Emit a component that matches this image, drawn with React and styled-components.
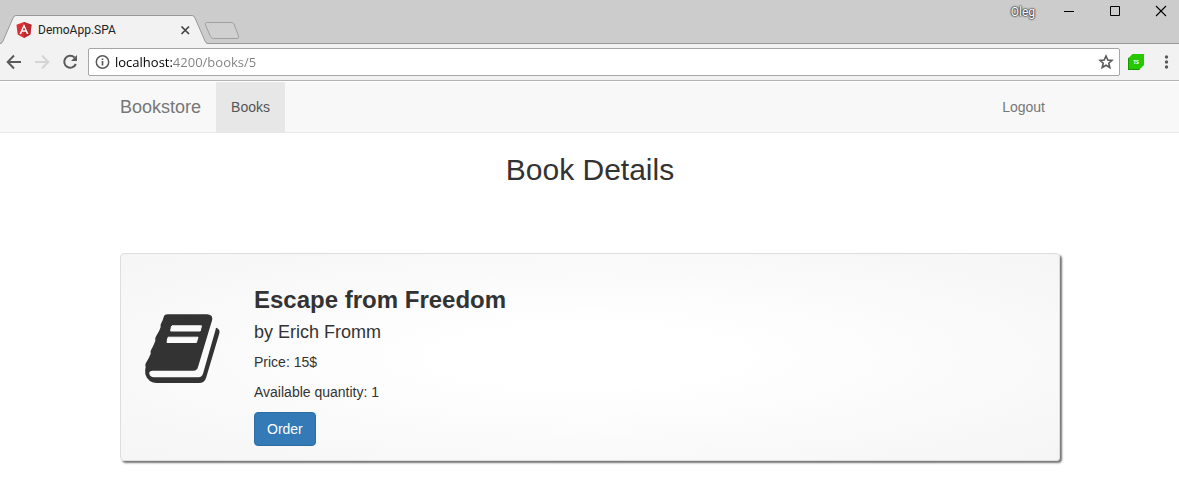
import React, { useState } from 'react';
import styled, { createGlobalStyle } from 'styled-components';

const GlobalStyle = createGlobalStyle`
  *, *::before, *::after { box-sizing: border-box; }
  body {
    margin: 0;
    background: #fff;
    color: #333;
    font: 14px/20px "Liberation Sans", Arial, sans-serif;
  }
  button, input { font: inherit; }
`;

const TabStrip = styled.header`
  display: flex;
  align-items: flex-start;
  height: 44px;
  background: #ccc;
  border-bottom: 1px solid #989898;
  font-family: Roboto, sans-serif;
`;

const Tab = styled.div`
  position: relative;
  display: flex;
  align-items: center;
  width: 208px;
  height: 29px;
  margin-top: 15px;
  padding: 0 16px;
  flex: none;
`;

const TabShape = styled.svg`
  position: absolute;
  inset: 0;
`;

const TabTitle = styled.span`
  position: relative;
  flex: 1;
  margin-left: 6px;
  font-size: 12px;
  color: #222;
`;

const TabLogo = styled.svg`
  position: relative;
`;

const PlainButton = styled.button`
  position: relative;
  display: flex;
  align-items: center;
  justify-content: center;
  flex: none;
  width: ${(p) => p.$width}px;
  height: ${(p) => p.$height}px;
  padding: 0;
  border: 0;
  background: none;
`;

const NewTab = styled(PlainButton)`
  margin: 22px auto 0 -4px;
`;

const Profile = styled.span`
  margin: 3px 12px 0 0;
  font-size: 12px;
  line-height: 18px;
  color: #fff;
  text-shadow: 0 0 1px #222, 0 0 2px #222, 0 0 2px #444;
`;

const Toolbar = styled.div`
  display: flex;
  align-items: center;
  height: 37px;
  background: #f2f2f2;
  border-bottom: 1px solid #b2b2b2;
`;

const AddressBox = styled.div`
  display: flex;
  align-items: center;
  flex: 1;
  height: 28px;
  margin-left: 4px;
  padding: 0 5px 0 6px;
  background: #fff;
  border: 1px solid #a6a6a6;
  border-radius: 2px;
`;

/* The host part is darker than the rest of the address. */
const AddressInput = styled.input`
  flex: 1;
  min-width: 0;
  height: 24px;
  margin-left: 5px;
  padding: 0;
  border: 0;
  outline: 0;
  font-family: "Open Sans", "Noto Sans", sans-serif;
  font-size: 13px;
  color: transparent;
  caret-color: #000;
  background: linear-gradient(90deg, #000 58px, #808080 58px);
  background-clip: text;
  -webkit-background-clip: text;
`;

const Navbar = styled.nav`
  margin-top: 1px;
  background: #f8f8f8;
  border-bottom: 1px solid #e7e7e7;
`;

const Container = styled.div`
  max-width: 969px;
  margin: 0 auto;
  padding: 0 14px 0 15px;
`;

const Main = styled(Container)`
  padding-bottom: 36px;
`;

const NavRow = styled(Container)`
  display: flex;
  align-items: center;
`;

const Brand = styled.a`
  padding: 15px 15px 15px 0;
  font-size: 18px;
  color: #777;
  text-decoration: none;
`;

const NavLink = styled.a`
  padding: 15px;
  color: ${(p) => (p.$active ? '#555' : '#777')};
  background: ${(p) => (p.$active ? '#e7e7e7' : 'transparent')};
  margin-left: ${(p) => (p.$end ? 'auto' : '0')};
  text-decoration: none;
`;

const PageTitle = styled.h2`
  margin: 20px 0 67px;
  font-size: 30px;
  line-height: 33px;
  font-weight: 400;
  text-align: center;
`;

const BookCard = styled.article`
  display: flex;
  align-items: center;
  gap: 33px;
  padding: 14px 24px;
  border: 1px solid #ddd;
  border-radius: 4px;
  background: radial-gradient(ellipse at center, #fff 0%, #fff 20%, #f5f5f5 100%);
  box-shadow: 2px 2px 2px #777;
`;

const BookIcon = styled.svg`
  flex: none;
  margin-top: -16px;
`;

const BookName = styled.h3`
  margin: 19px 0 9px;
  font-size: 24px;
  line-height: 26px;
  font-weight: 700;
`;

const Author = styled.h4`
  margin: 0 0 10px;
  font-size: 18px;
  line-height: 20px;
  font-weight: 400;
`;

const Detail = styled.p`
  margin: 0 0 10px;
`;

const OrderButton = styled.button`
  padding: 6px 12px;
  border: 1px solid #2e6da4;
  border-radius: 4px;
  background: #337ab7;
  color: #fff;
  line-height: 20px;
`;

export default function App() {
  const [address, setAddress] = useState('localhost:4200/books/5');

  return (
    <>
      <GlobalStyle />
      <TabStrip>
        <Tab>
          <TabShape width="208" height="29" viewBox="0 0 208 29" aria-hidden="true">
            <path d="M0 29 Q2 28.500 3 26 L13 3 Q14 .5 16 .5 H192 Q194 .5 195 3 L205 26 Q206 28.500 208 29Z" fill="#f2f2f2" />
            <path d="M0 28.500 Q2 28.500 3 26 L13 3 Q14 .5 16 .5 H192 Q194 .5 195 3 L205 26 Q206 28.500 208 28.500" fill="none" stroke="#989898" />
          </TabShape>
          <TabLogo width="16" height="16" viewBox="0 0 16 16" aria-hidden="true">
            <path d="M8 0 15.500 2.700 14.300 12.500 8 16 1.700 12.500.5 2.700Z" fill="#dd3035" />
            <path d="M8 0 15.500 2.700 14.300 12.500 8 16Z" fill="#b92b31" />
            <path d="M8 2 3.500 12H5.200L6.100 9.700H9.900L10.800 12H12.500ZM8 5.200 9.300 8.300H6.700Z" fill="#fff" fillRule="evenodd" />
          </TabLogo>
          <TabTitle>DemoApp.SPA</TabTitle>
          <PlainButton $width={14} $height={16} aria-label="Close tab">
            <svg width="14" height="16" viewBox="0 0 14 16">
              <path d="M3.500 4.500 11 12M11 4.500 3.500 12" stroke="#444" strokeWidth="1.700" />
            </svg>
          </PlainButton>
        </Tab>
        <NewTab $width={36} $height={18} aria-label="New tab">
          <svg width="36" height="18" viewBox="0 0 36 18">
            <path d="M2.500 .5H27Q29 .5 30 2L34.500 14Q35 16.500 33 16.500H9.500Q7.500 16.500 6.500 14.500L1.500 3Q.5 .5 2.500 .5Z" fill="#d0d0d0" stroke="#a0a0a0" />
          </svg>
        </NewTab>
        <Profile>Oleg</Profile>
        <PlainButton $width={46} $height={22} aria-label="Minimize">
          <svg width="46" height="22"><path d="M17 11.500H27" stroke="#000" /></svg>
        </PlainButton>
        <PlainButton $width={46} $height={22} aria-label="Maximize">
          <svg width="46" height="22"><path d="M17.500 6.500H26.500V15.500H17.500Z" fill="none" stroke="#000" /></svg>
        </PlainButton>
        <PlainButton $width={40} $height={22} aria-label="Close window">
          <svg width="40" height="22"><path d="M17 6 27 16M27 6 17 16" stroke="#000" strokeWidth="1.100" /></svg>
        </PlainButton>
      </TabStrip>
      <Toolbar>
        <PlainButton $width={28} $height={28} aria-label="Back">
          <svg width="28" height="28"><path d="M21 14H8M14 7.500 7.700 14 14 20.500" fill="none" stroke="#5a5a5a" strokeWidth="2" /></svg>
        </PlainButton>
        <PlainButton $width={28} $height={28} aria-label="Forward" disabled>
          <svg width="28" height="28"><path d="M7 14H20M14 7.500 20.300 14 14 20.500" fill="none" stroke="#d4d4d4" strokeWidth="2" /></svg>
        </PlainButton>
        <PlainButton $width={28} $height={28} aria-label="Reload">
          <svg width="28" height="28">
            <path d="M18.500 9.500A6 6 0 1 0 19.800 16" fill="none" stroke="#5a5a5a" strokeWidth="2" />
            <path d="M21 7V13H15Z" fill="#5a5a5a" />
          </svg>
        </PlainButton>
        <AddressBox>
          <PlainButton $width={15} $height={16} aria-label="Site information">
            <svg width="15" height="16">
              <circle cx="7.500" cy="8" r="6.200" fill="none" stroke="#5a5a5a" strokeWidth="1.500" />
              <path d="M7.500 7V11.500M7.500 4.500V6" stroke="#5a5a5a" strokeWidth="1.700" />
            </svg>
          </PlainButton>
          <AddressInput
            aria-label="Address"
            spellCheck={false}
            value={address}
            onChange={(e) => setAddress(e.target.value)}
          />
          <PlainButton $width={16} $height={16} aria-label="Bookmark this page">
            <svg width="16" height="16">
              <path d="M8 2 9.800 6 14 6.400 10.800 9.200 11.800 13.500 8 11.200 4.200 13.500 5.200 9.200 2 6.400 6.200 6Z" fill="none" stroke="#5a5a5a" strokeWidth="1.600" />
            </svg>
          </PlainButton>
        </AddressBox>
        <PlainButton $width={32} $height={28} aria-label="TS extension">
          <svg width="32" height="28">
            <path d="M12.500 6H24V17L19 22H8V10.500Z" fill="#27c800" />
            <path d="M8 10.500 9 9.500V21H20L19 22H8Z" fill="#159500" />
            <text x="16" y="16" textAnchor="middle" fontFamily="Open Sans" fontWeight="700" fontSize="5" fill="#fff">TS</text>
          </svg>
        </PlainButton>
        <PlainButton $width={27} $height={28} aria-label="Menu">
          <svg width="27" height="28">
            <g fill="#5a5a5a"><circle cx="14.500" cy="9" r="1.700" /><circle cx="14.500" cy="14" r="1.700" /><circle cx="14.500" cy="19" r="1.700" /></g>
          </svg>
        </PlainButton>
      </Toolbar>
      <Navbar>
        <NavRow>
          <Brand href="#">Bookstore</Brand>
          <NavLink href="#books" $active>Books</NavLink>
          <NavLink href="#logout" $end>Logout</NavLink>
        </NavRow>
      </Navbar>
      <Main as="main">
        <PageTitle>Book Details</PageTitle>
        <BookCard>
          <BookIcon width="76" height="70" viewBox="0 0 76 70" aria-hidden="true">
            <path
              d="M20 .8Q22 0 24 .3H62Q68.500 .8 67 6.500L53 53Q52 56.800 48.500 56.800H7.500Q4 57 4.300 59.500Q5 63.300 9 63.300H53.500Q57 63.300 58.200 59L70.500 16Q70.700 14 71.200 13.700Q75.500 15.500 74.300 19.500L61.200 63.500Q59.500 69 54 69H11Q3 68 .6 61Q-.3 57 .7 53Q-.2 50.500 1.200 48.500Q4.500 43 5.800 39.500Q5.200 37.500 6.200 35.800Q9.600 29.500 10.400 26.300Q9.900 24 11.200 22Q14.500 17 15.700 13Q15.200 11 16.200 9.300Q18 6 18.700 3Q19.200 1.500 20 .8Z"
              fill="#333"
            />
            <path d="M27 11.800H56.500L55.200 17H25.700L26.300 13ZM23.200 23.200H53L51.400 28.500H22L22.600 24.600Z" fill="#fafafa" stroke="#fafafa" strokeLinejoin="round" />
          </BookIcon>
          <div>
            <BookName>Escape from Freedom</BookName>
            <Author>by Erich Fromm</Author>
            <Detail>Price: 15$</Detail>
            <Detail>Available quantity: 1</Detail>
            <OrderButton type="button">Order</OrderButton>
          </div>
        </BookCard>
      </Main>
    </>
  );
}
